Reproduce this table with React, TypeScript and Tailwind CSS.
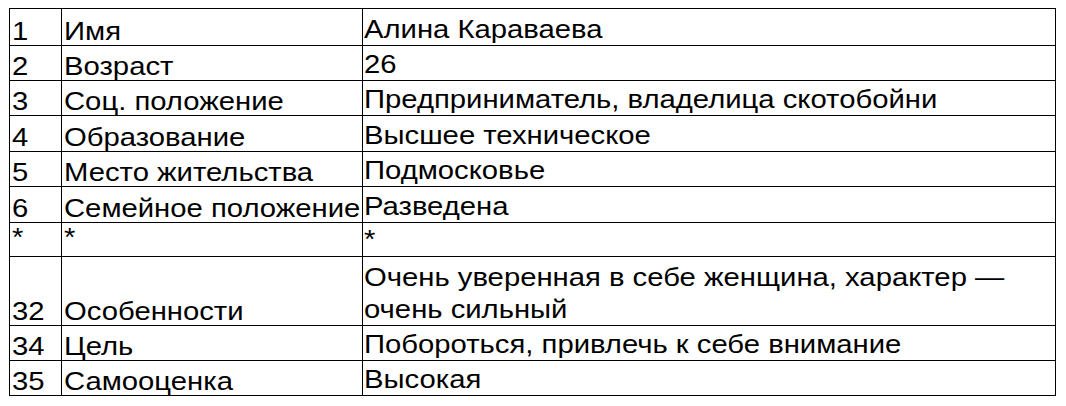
import React from "react";

const rows: { n: string; k: string; v: React.ReactNode; h: string }[] = [
  { n: "1", k: "Имя", v: "Алина Караваева", h: "h-[37px]" },
  { n: "2", k: "Возраст", v: "26", h: "h-[35px]" },
  { n: "3", k: "Соц. положение", v: "Предприниматель, владелица скотобойни", h: "h-[35px]" },
  { n: "4", k: "Образование", v: "Высшее техническое", h: "h-[36px]" },
  { n: "5", k: "Место жительства", v: "Подмосковье", h: "h-[35px]" },
  { n: "6", k: "Семейное положение", v: "Разведена", h: "h-[36px]" },
  { n: "*", k: "*", v: "*", h: "h-[34px]" },
  {
    n: "32",
    k: "Особенности",
    v: (
      <>
        Очень уверенная в себе женщина, характер —
        <br />
        очень сильный
      </>
    ),
    h: "h-[69px]",
  },
  { n: "34", k: "Цель", v: "Побороться, привлечь к себе внимание", h: "h-[35px]" },
  { n: "35", k: "Самооценка", v: "Высокая", h: "h-[35px]" },
];

export default function App() {
  return (
    <div className="w-[1066px] h-[406px] bg-white pt-[8px] pl-[9px] font-['Liberation_Sans',Arial,sans-serif] text-black text-[25px]">
      <div className="w-[1047px] border-l border-t border-black">
        {rows.map((r, i) => {
          const star = r.n === "*";
          const align = star ? "items-start" : "items-end";
          return (
            <div key={i} className={`flex ${r.h}`}>
              <div className={`w-[52px] shrink-0 border-r border-b border-black pl-[2px] flex ${align}`}>
                <span className="leading-[28px] whitespace-nowrap origin-left scale-x-[1.17]">{r.n}</span>
              </div>
              <div className={`w-[301px] shrink-0 border-r border-b border-black pl-[2px] flex ${align}`}>
                <span className="leading-[28px] whitespace-nowrap origin-left scale-x-[1.17]">{r.k}</span>
              </div>
              <div className={`w-[693px] shrink-0 border-r border-b border-black pl-[1px] flex ${align}`}>
                <span className="leading-[32px] whitespace-nowrap origin-left scale-x-[1.17]">{r.v}</span>
              </div>
            </div>
          );
        })}
      </div>
    </div>
  );
}
